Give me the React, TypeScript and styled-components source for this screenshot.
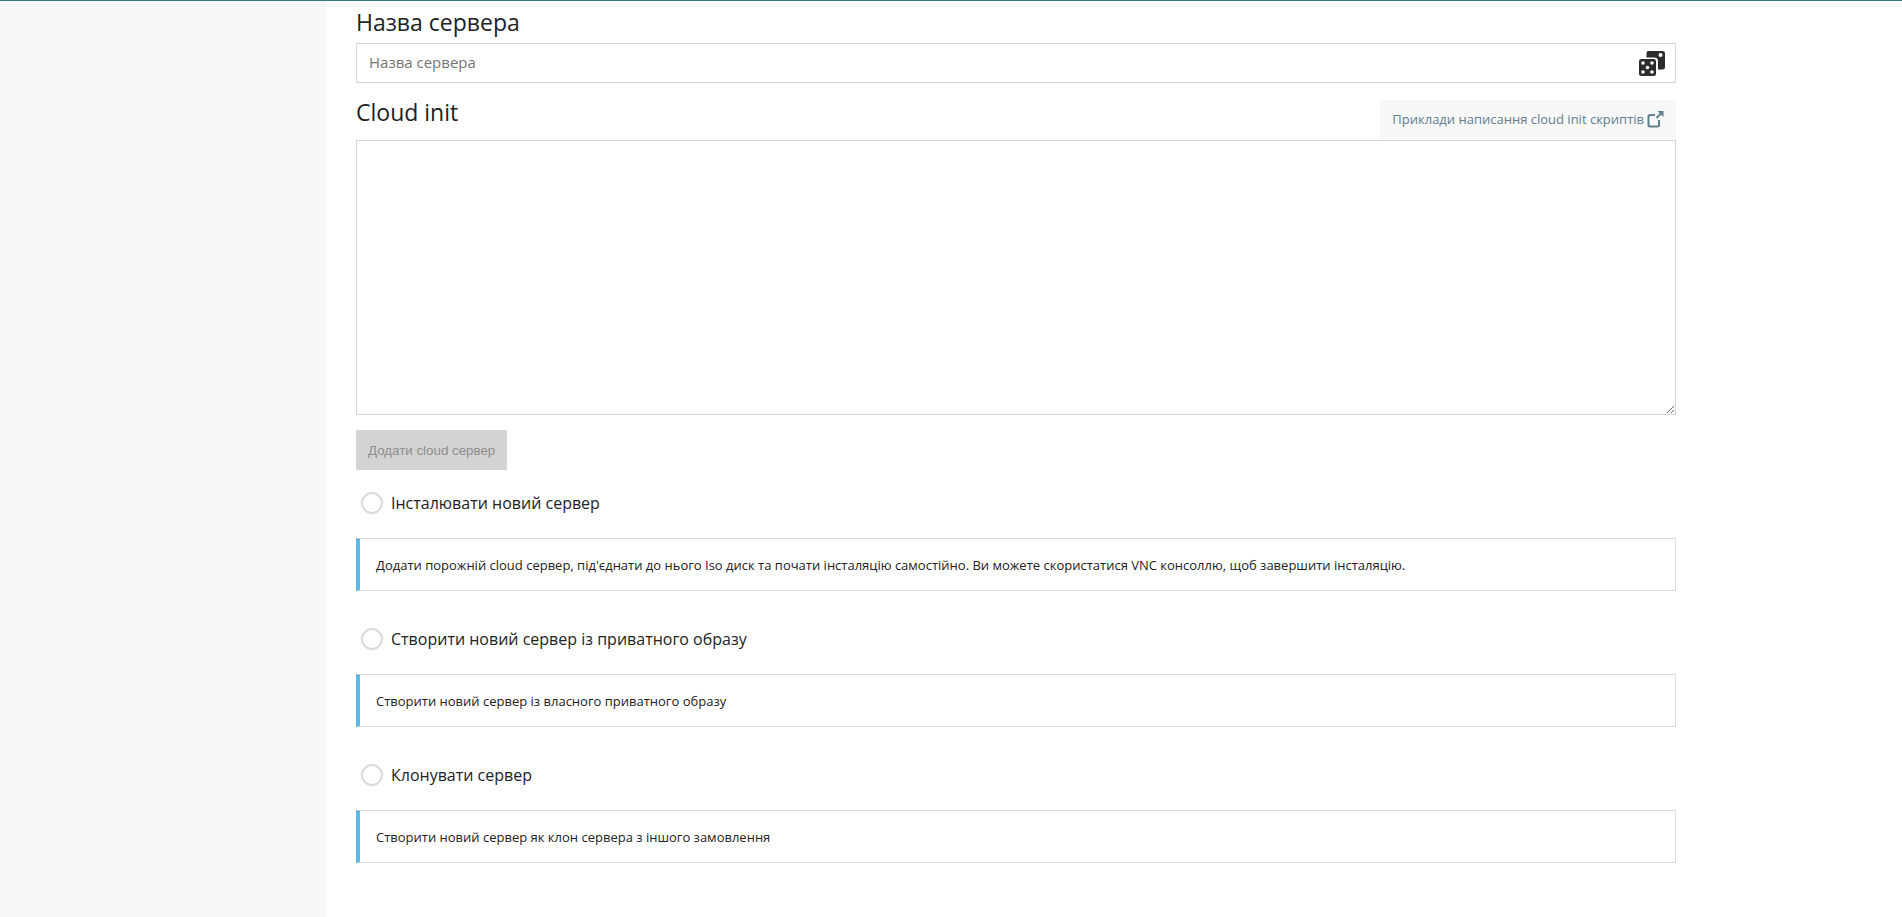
import React, { useState } from "react";
import styled, { createGlobalStyle } from "styled-components";

const GlobalStyle = createGlobalStyle`
  *, *::before, *::after { box-sizing: border-box; }
  body {
    margin: 0;
    background: #fff;
    color: #222;
    font-family: "Open Sans", "Noto Sans", sans-serif;
    font-size: 13px;
  }
`;

const Page = styled.div`
  display: flex;
  min-height: 100vh;
  border-top: 1px solid #35777f;
`;

const Sidebar = styled.aside`
  flex: 0 0 327px;
  background: #f8f8f8;
`;

const Main = styled.main`
  flex: 1;
  min-width: 0;
  padding: 0 29px 24px;
`;

const Form = styled.form`
  max-width: 1320px;
`;

const Heading = styled.label`
  display: block;
  font-size: 23px;
  line-height: 42px;
`;

const NameField = styled.div`
  display: flex;
  align-items: center;
  height: 40px;
  padding-right: 9px;
  border: 1px solid #d6d6d6;
`;

const NameInput = styled.input`
  flex: 1;
  min-width: 0;
  height: 100%;
  padding: 0 12px 2px;
  border: 0;
  outline: 0;
  background: transparent;
  color: #222;
  font-family: inherit;
  font-size: 15px;
`;

const DiceButton = styled.button`
  display: flex;
  padding: 0;
  border: 0;
  background: transparent;
  cursor: pointer;
`;

const ScriptHeader = styled.div`
  display: flex;
  align-items: flex-end;
  justify-content: space-between;
  padding-top: 8px;
`;

const ScriptHeading = styled(Heading)`
  padding-bottom: 7px;
`;

const ExamplesLink = styled.a`
  display: flex;
  align-items: center;
  gap: 3px;
  height: 40px;
  padding: 0 12px 2px;
  background: #f8f8f8;
  color: #5f7f8f;
  text-decoration: none;
`;

const ScriptArea = styled.textarea`
  display: block;
  width: 100%;
  height: 275px;
  padding: 12px;
  border: 1px solid #d6d6d6;
  border-radius: 0;
  outline: 0;
  background: #fff;
  font-family: inherit;
  font-size: 15px;
  resize: vertical;
`;

const SubmitButton = styled.button`
  height: 40px;
  margin: 15px 0 13px;
  padding: 0 12px;
  border: 0;
  background: #d3d3d3;
  color: #8e8e8e;
  font-family: "Liberation Sans", Arial, sans-serif;
`;

const Option = styled.section`
  margin-bottom: 28px;
`;

const OptionLabel = styled.label`
  display: flex;
  align-items: center;
  gap: 8px;
  width: fit-content;
  height: 40px;
  padding-left: 5px;
  font-size: 16px;
  cursor: pointer;
`;

const Radio = styled.input`
  appearance: none;
  flex: none;
  width: 22px;
  height: 22px;
  margin: 0;
  border: 2px solid #d9d9d9;
  border-radius: 50%;
  background: #fff;

  &:checked {
    background: #5bb9e8;
    box-shadow: inset 0 0 0 3px #fff;
  }
`;

const Note = styled.p`
  margin: 15px 0 0;
  padding: 17px 16px 15px;
  border: 1px solid #dcdcdc;
  border-left: 4px solid #5bb9e8;
  line-height: 19px;
`;

const options = [
  {
    id: "install",
    title: "Інсталювати новий сервер",
    note: "Додати порожній cloud сервер, під'єднати до нього Iso диск та почати інсталяцію самостійно. Ви можете скористатися VNC консоллю, щоб завершити інсталяцію.",
  },
  {
    id: "image",
    title: "Створити новий сервер із приватного образу",
    note: "Створити новий сервер із власного приватного образу",
  },
  {
    id: "clone",
    title: "Клонувати сервер",
    note: "Створити новий сервер як клон сервера з іншого замовлення",
  },
];

const DiceIcon = () => (
  <svg width="28" height="28" viewBox="0 -1 28 28" aria-hidden="true">
    <path
      fill="#2d2d2d"
      d="M10.500 1H24.500Q27 1 27 3.500V17Q27 19.500 24.500 19.500H20V11Q20 7.500 16.500 7.500H8.500V3Q8.500 1 10.500 1Z"
    />
    <rect x="1" y="9" width="17" height="17" rx="2.500" fill="#2d2d2d" />
    <g fill="#fff">
      <circle cx="22.500" cy="5" r="2" />
      <circle cx="5" cy="13" r="1.800" />
      <circle cx="14" cy="13" r="1.800" />
      <circle cx="9.500" cy="17.500" r="1.800" />
      <circle cx="5" cy="22" r="1.800" />
      <circle cx="14" cy="22" r="1.800" />
    </g>
  </svg>
);

const ExternalIcon = () => (
  <svg width="17" height="17" viewBox="0 0 17 17" aria-hidden="true">
    <path
      d="M8 4H3Q1.500 4 1.500 5.500V14Q1.500 15.500 3 15.500H10.500Q12 15.500 12 14V9"
      fill="none"
      stroke="#5f7f8f"
      strokeWidth="2"
    />
    <path d="M9.500 7L14 2.500" stroke="#5f7f8f" strokeWidth="2" />
    <path d="M10.500 0H16.500V6Z" fill="#5f7f8f" />
  </svg>
);

export default function App() {
  const [name, setName] = useState("");
  const [mode, setMode] = useState("");

  return (
    <>
      <GlobalStyle />
      <Page>
        <Sidebar />
        <Main>
          <Form onSubmit={(event) => event.preventDefault()}>
            <Heading htmlFor="server-name">Назва сервера</Heading>
            <NameField>
              <NameInput
                id="server-name"
                placeholder="Назва сервера"
                value={name}
                onChange={(event) => setName(event.target.value)}
              />
              <DiceButton
                type="button"
                aria-label="Випадкова назва"
                onClick={() => setName(`server-${Math.floor(Math.random() * 10000)}`)}
              >
                <DiceIcon />
              </DiceButton>
            </NameField>

            <ScriptHeader>
              <ScriptHeading htmlFor="cloud-init">Cloud init</ScriptHeading>
              <ExamplesLink href="#examples">
                Приклади написання cloud init скриптів
                <ExternalIcon />
              </ExamplesLink>
            </ScriptHeader>
            <ScriptArea id="cloud-init" />
            <SubmitButton type="submit" disabled>
              Додати cloud сервер
            </SubmitButton>

            {options.map((option) => (
              <Option key={option.id}>
                <OptionLabel>
                  <Radio
                    type="radio"
                    name="mode"
                    value={option.id}
                    checked={mode === option.id}
                    onChange={() => setMode(option.id)}
                  />
                  {option.title}
                </OptionLabel>
                <Note>{option.note}</Note>
              </Option>
            ))}
          </Form>
        </Main>
      </Page>
    </>
  );
}
